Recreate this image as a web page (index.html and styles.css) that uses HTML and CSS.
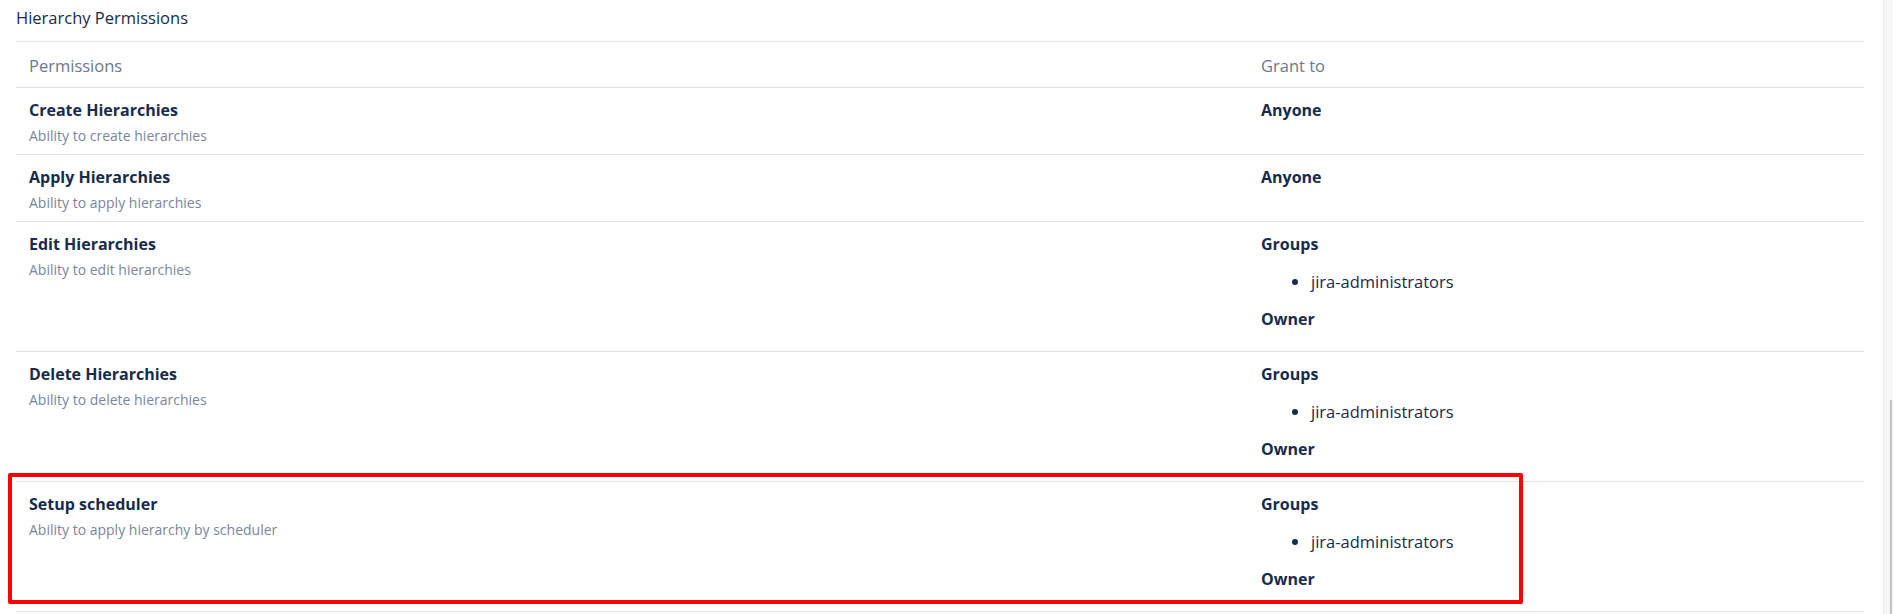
FILE: index.html
```html
<!DOCTYPE html>
<html lang="en">
<head>
<meta charset="utf-8">
<title>Hierarchy Permissions</title>
<link rel="stylesheet" href="styles.css">
</head>
<body>
<div class="page">
  <main class="content">
    <h2 class="section-title">Hierarchy Permissions</h2>
    <table class="perm-table">
      <colgroup><col class="col-perm"><col class="col-grant"></colgroup>
      <thead>
        <tr><th>Permissions</th><th>Grant to</th></tr>
      </thead>
      <tbody>
        <tr>
          <td><div class="perm-name">Create Hierarchies</div><div class="perm-desc">Ability to create hierarchies</div></td>
          <td><div class="grant-label">Anyone</div></td>
        </tr>
        <tr>
          <td><div class="perm-name">Apply Hierarchies</div><div class="perm-desc">Ability to apply hierarchies</div></td>
          <td><div class="grant-label">Anyone</div></td>
        </tr>
        <tr>
          <td><div class="perm-name">Edit Hierarchies</div><div class="perm-desc">Ability to edit hierarchies</div></td>
          <td>
            <div class="grant-label">Groups</div>
            <ul class="grant-list"><li>jira-administrators</li></ul>
            <div class="grant-label grant-last">Owner</div>
          </td>
        </tr>
        <tr>
          <td><div class="perm-name">Delete Hierarchies</div><div class="perm-desc">Ability to delete hierarchies</div></td>
          <td>
            <div class="grant-label">Groups</div>
            <ul class="grant-list"><li>jira-administrators</li></ul>
            <div class="grant-label grant-last">Owner</div>
          </td>
        </tr>
        <tr>
          <td><div class="perm-name">Setup scheduler</div><div class="perm-desc">Ability to apply hierarchy by scheduler</div></td>
          <td>
            <div class="grant-label">Groups</div>
            <ul class="grant-list"><li>jira-administrators</li></ul>
            <div class="grant-label grant-last">Owner</div>
          </td>
        </tr>
      </tbody>
    </table>
    <div class="highlight"></div>
  </main>
  <div class="scrollbar"><div class="scroll-thumb"></div></div>
</div>
</body>
</html>
```

FILE: styles.css
```css
html, body {
  margin: 0;
  padding: 0;
  background: #ffffff;
  height: 100%;
  overflow: hidden;
}

body {
  font-family: "Open Sans", "Noto Sans", "Liberation Sans", sans-serif;
  font-size: 16.5px;
  color: #172b4d;
}

.page {
  display: flex;
  height: 614px;
  overflow: hidden;
}

.content {
  position: relative;
  flex: 1;
  padding: 0 19px 0 16px;
  min-width: 0;
}

.section-title {
  margin: 7px 0 12px 0;
  font-size: 16.5px;
  font-weight: 400;
  line-height: 22px;
  color: #172b4d;
}

.perm-table {
  width: 100%;
  border-collapse: collapse;
  table-layout: fixed;
}

.col-perm {
  width: 66.667%;
}

.perm-table th,
.perm-table td {
  border-top: 1px solid #dfe1e6;
  text-align: left;
  vertical-align: top;
}

.perm-table tbody tr:last-child td {
  border-bottom: 1px solid #dfe1e6;
}

.perm-table th {
  padding: 12px 13px 10px 13px;
  font-weight: 400;
  font-size: 16.5px;
  line-height: 23px;
  color: #6b778c;
}

.perm-table td {
  padding: 11px 13px 7px 13px;
}

.perm-name {
  font-size: 16px;
  font-weight: 700;
  line-height: 22px;
  color: #172b4d;
}

.perm-desc {
  margin-top: 4px;
  margin-bottom: 1px;
  font-size: 14px;
  line-height: 21px;
  color: #7a869a;
}

.grant-label {
  font-size: 16px;
  font-weight: 700;
  line-height: 22px;
  color: #172b4d;
}

.grant-last {
  margin-bottom: 14px;
}

.grant-list {
  margin: 16px 0 15px 0;
  padding-left: 50px;
  font-size: 16.5px;
  line-height: 22px;
  color: #172b4d;
}

.highlight {
  position: absolute;
  left: 8px;
  top: 473px;
  width: 1515px;
  height: 131px;
  box-sizing: border-box;
  border: 4px solid #ff0000;
  border-radius: 2px;
  pointer-events: none;
}

.scrollbar {
  position: relative;
  width: 10px;
  box-sizing: border-box;
  border-left: 1px solid #ececec;
  background: #f6f6f6;
}

.scroll-thumb {
  position: absolute;
  right: 1px;
  top: 400px;
  bottom: 0;
  width: 2px;
  background: #c4c4c4;
}
```
